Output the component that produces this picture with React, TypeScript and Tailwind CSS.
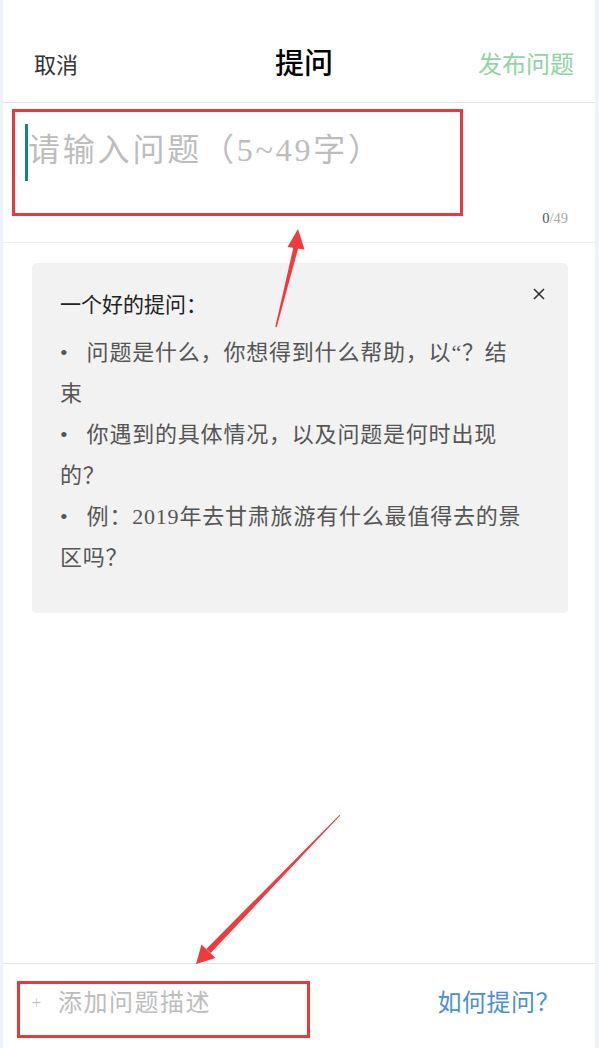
import React from "react";

const F = "font-['Liberation_Serif','Noto_Sans_CJK_SC',serif]";

function Bullet({ text }: { text: string }) {
  return <p className="leading-[41px]">{"•\u2002 " + text}</p>;
}

export default function App() {
  return (
    <div className={`relative w-[599px] h-[1048px] bg-white border-l-[3px] border-r-[4px] border-[#edf2f8] flex flex-col overflow-hidden ${F}`}>
      {/* Header */}
      <div className="h-[103px] shrink-0 border-b border-[#e4e6ea] grid grid-cols-[1fr_auto_1fr] items-center pt-[28px] pl-[31px] pr-[21px]">
        <span className="text-[22px] text-[#333] justify-self-start">取消</span>
        <span className="text-[29px] font-medium text-black">提问</span>
        <span className="text-[24px] text-[#8fd4a1] justify-self-end">发布问题</span>
      </div>

      {/* Input */}
      <div className="h-[140px] shrink-0 border-b border-[#eceef1] relative pl-[22px] pt-[21px]">
        <div className="flex items-start">
          <div className="w-[3px] h-[57px] bg-[#13877a]" />
          <span className="mt-[4px] text-[32px] leading-[44px] tracking-[2.8px] text-[#bdbdbd]">请输入问题（5~49字）</span>
        </div>
        <div className="absolute right-[27px] bottom-[17px] text-[14.5px] leading-none">
          <span className="text-[#555]">0</span>
          <span className="text-[#aaa]">/49</span>
        </div>
      </div>

      {/* Middle */}
      <div className="flex-1 pt-[20px] pl-[29px] pr-[27px]">
        <div className="relative h-[350px] rounded-[5px] bg-[#f2f2f2] pl-[28px] pr-[44px] pt-[27px]">
          <p className="text-[21px] leading-[30px] text-[#222] mb-[12px]">一个好的提问：</p>
          <div className="text-[22px] tracking-[0.8px] text-[#555]">
            <Bullet text="问题是什么，你想得到什么帮助，以“？结束" />
            <Bullet text="你遇到的具体情况，以及问题是何时出现的？" />
            <Bullet text="例：2019年去甘肃旅游有什么最值得去的景区吗？" />
          </div>
          <svg className="absolute left-[500px] top-[24px]" width="14" height="14" viewBox="0 0 14 14">
            <path d="M2 2 L12 12 M12 2 L2 12" stroke="#333" strokeWidth="1.6" />
          </svg>
        </div>
      </div>

      {/* Bottom bar */}
      <div className="h-[85px] shrink-0 border-t border-[#e2e2e2] flex items-center justify-between pl-[29px] pr-[35px] pb-[6px]">
        <div className="flex items-center text-[#bdbdbd]">
          <span className="text-[16px] w-[26px]">+</span>
          <span className="text-[24px] tracking-[1.5px]">添加问题描述</span>
        </div>
        <span className="text-[24px] tracking-[0.5px] text-[#4a8fd8]">如何提问？</span>
      </div>

      {/* Annotation overlays */}
      <div className="absolute left-[9px] top-[109px] w-[451px] h-[107px] border-[3px] border-[#e53b3b] pointer-events-none" />
      <div className="absolute left-[14px] top-[981px] w-[293px] h-[57px] border-[3px] border-[#e53b3b] pointer-events-none" />
      <svg className="absolute left-[-3px] top-0 pointer-events-none" width="599" height="1048" viewBox="0 0 599 1048">
        <polygon points="298.4,247.5 293.6,246.5 275.3,326.8 276.7,327.2" fill="#ef3b3b" />
        <polygon points="298,229 287.5,247 304.5,249.5" fill="#ef3b3b" />
        <polygon points="210.7,953.1 206.3,948.9 339.6,814.7 340.4,815.3" fill="#ef3b3b" />
        <polygon points="196,964 201.5,944.5 215.5,958" fill="#ef3b3b" />
      </svg>
    </div>
  );
}
